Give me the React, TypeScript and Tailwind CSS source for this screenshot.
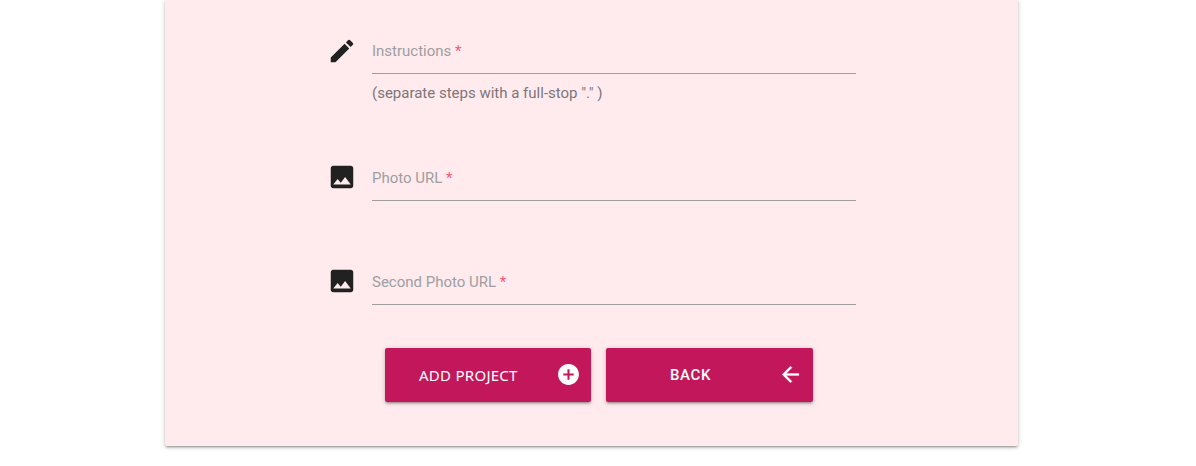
import type { ReactNode } from 'react';

const Pencil = () => (
  <svg viewBox="0 0 24 24" className="mt-px size-[30px] fill-[#212121]"><path d="M3 17.25V21h3.75L17.81 9.94l-3.75-3.75L3 17.25zM20.71 7.04a1 1 0 0 0 0-1.41l-2.34-2.34a1 1 0 0 0-1.41 0l-1.83 1.83 3.75 3.75 1.83-1.83z" /></svg>
);
const Photo = () => (
  <svg viewBox="0 0 24 24" className="size-[30px] fill-[#212121]"><path d="M21 19V5c0-1.1-.9-2-2-2H5c-1.1 0-2 .9-2 2v14c0 1.1.9 2 2 2h14c1.1 0 2-.9 2-2zM8.5 13.5l2.5 3.01L14.5 12l4.5 6H5l3.5-4.5z" /></svg>
);

function Field({ icon, label, className }: { icon: ReactNode; label: string; className: string }) {
  return (
    <div className={`flex h-[46px] w-[529px] ${className}`}>
      <div className="w-[45px] pt-[7px]">{icon}</div>
      <div className="h-[46px] flex-1 border-b border-[#9e9e9e] pt-[11px] text-[15px] leading-[24px] text-[#9e9e9e]">
        {label} <span className="text-[#f5567a]">*</span>
      </div>
    </div>
  );
}

export default function App() {
  return (
    <div className="h-[466px] overflow-hidden bg-white font-['Roboto',sans-serif]">
      <main className="ml-[165px] h-[446px] w-[853px] rounded-b-[2px] bg-[#ffebee] pl-[162px] pt-[28px] shadow-[0_2px_2px_0_rgba(0,0,0,0.14),0_3px_1px_-2px_rgba(0,0,0,0.12),0_1px_5px_0_rgba(0,0,0,0.2)]">
        <Field icon={<Pencil />} label="Instructions" className="" />
        <p className="ml-[45px] mt-[7px] h-[24px] text-[15px] leading-[24px] text-[#7c7678]">(separate steps with a full-stop "." )</p>
        <Field icon={<Photo />} label="Photo URL" className="mt-[50px]" />
        <Field icon={<Photo />} label="Second Photo URL" className="mt-[58px]" />
        <div className="ml-[58px] mt-[43px] flex gap-[15px] text-[15px] font-medium tracking-[0.5px] text-white">
          <button className="flex h-[54px] w-[206px] items-center rounded-[2px] bg-[#c2185b] pl-[34px] pr-[10px] shadow-[0_2px_2px_0_rgba(0,0,0,0.14),0_3px_1px_-2px_rgba(0,0,0,0.12),0_1px_5px_0_rgba(0,0,0,0.2)]">
            <span className="flex-1 text-left font-['Noto_Sans',sans-serif] font-normal tracking-[0.27px]">ADD PROJECT</span>
            <svg viewBox="0 0 24 24" className="mb-px size-[25px] fill-white"><path d="M12 2C6.48 2 2 6.48 2 12s4.48 10 10 10 10-4.48 10-10S17.52 2 12 2zm5 11h-4v4h-2v-4H7v-2h4V7h2v4h4v2z" /></svg>
          </button>
          <button className="flex h-[54px] w-[207px] items-center rounded-[2px] bg-[#c2185b] pl-[64px] pr-[10px] shadow-[0_2px_2px_0_rgba(0,0,0,0.14),0_3px_1px_-2px_rgba(0,0,0,0.12),0_1px_5px_0_rgba(0,0,0,0.2)]">
            <span className="flex-1 text-left tracking-[0.6px]">BACK</span>
            <svg viewBox="0 0 24 24" className="mb-px size-[25px] fill-white stroke-white stroke-[0.3]"><path d="M20 11H7.83l5.59-5.59L12 4l-8 8 8 8 1.41-1.41L7.83 13H20v-2z" /></svg>
          </button>
        </div>
      </main>
    </div>
  );
}
